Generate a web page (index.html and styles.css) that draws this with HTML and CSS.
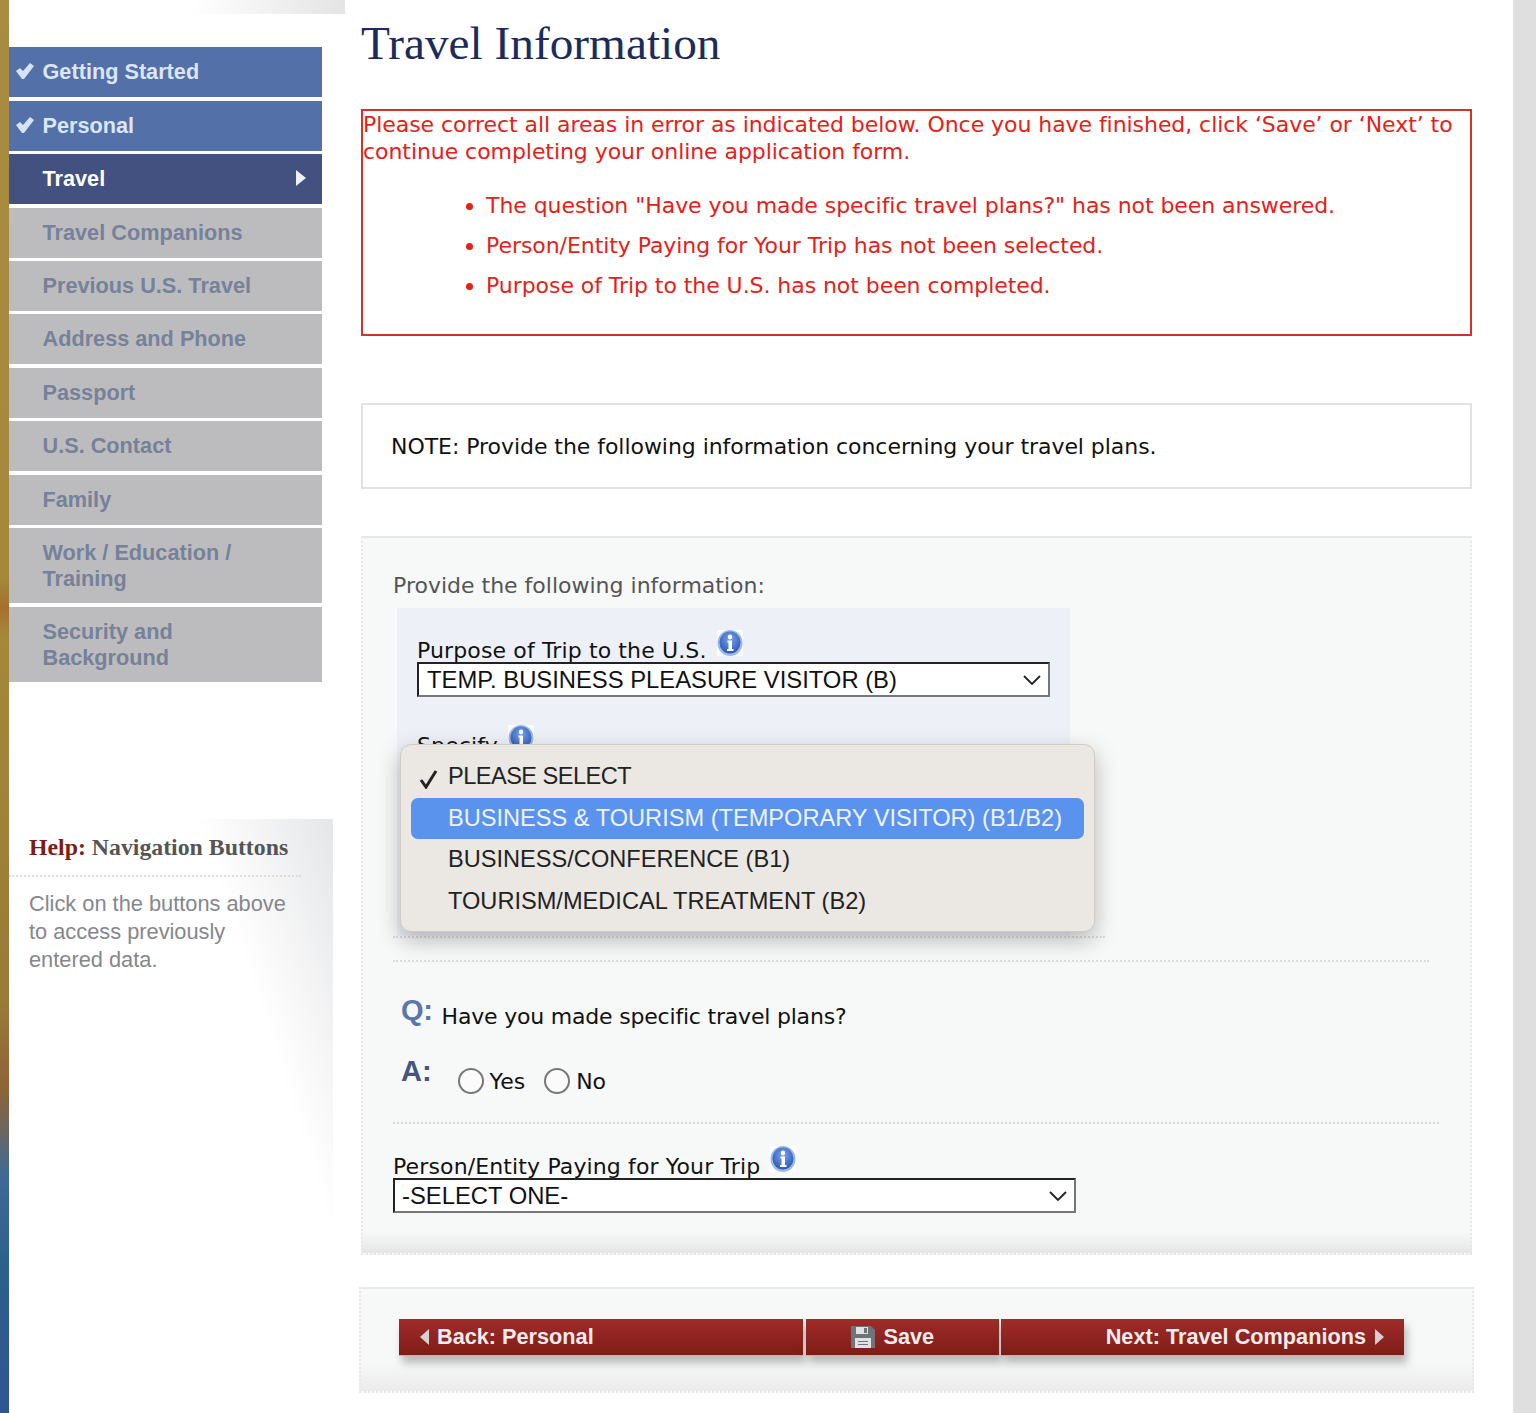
FILE: index.html
```html
<!DOCTYPE html>
<html lang="en">
<head>
<meta charset="utf-8">
<title>Travel Information</title>
<link rel="stylesheet" href="styles.css">
</head>
<body>
<div class="page">
  <div class="rail"></div>
  <aside class="side">
    <div class="side-top"></div>
    <nav class="nav">
      <a class="item done"><svg class="check" viewBox="0 0 18 16"><path d="M0 8l4-3 3 3 7-8 4 3-10 13H6z"/></svg>Getting Started</a>
      <a class="item done"><svg class="check" viewBox="0 0 18 16"><path d="M0 8l4-3 3 3 7-8 4 3-10 13H6z"/></svg>Personal</a>
      <a class="item current">Travel<svg class="arrow" viewBox="0 0 10 16"><path d="M0 0l10 8-10 8z"/></svg></a>
      <a class="item">Travel Companions</a>
      <a class="item">Previous U.S. Travel</a>
      <a class="item">Address and Phone</a>
      <a class="item">Passport</a>
      <a class="item">U.S. Contact</a>
      <a class="item">Family</a>
      <a class="item tall">Work / Education /<br>Training</a>
      <a class="item tall">Security and<br>Background</a>
    </nav>
    <section class="help">
      <h3 class="help-title"><span class="help-key">Help:</span> Navigation Buttons</h3>
      <p class="help-text">Click on the buttons above<br>to access previously<br>entered data.</p>
    </section>
  </aside>
  <main class="main">
    <h1 class="title">Travel Information</h1>
    <div class="errors">
      <p class="errors-intro">Please correct all areas in error as indicated below. Once you have finished, click ‘Save’ or ‘Next’ to continue completing your online application form.</p>
      <ul class="errors-list">
        <li>The question "Have you made specific travel plans?" has not been answered.</li>
        <li>Person/Entity Paying for Your Trip has not been selected.</li>
        <li>Purpose of Trip to the U.S. has not been completed.</li>
      </ul>
    </div>
    <div class="note">NOTE: Provide the following information concerning your travel plans.</div>
    <section class="panel">
      <p class="lead">Provide the following information:</p>
      <div class="group">
        <div class="label">Purpose of Trip to the U.S. <svg class="info" viewBox="0 0 26 26"><use href="#i"/></svg></div>
        <div class="select">TEMP. BUSINESS PLEASURE VISITOR (B)<svg class="chev" viewBox="0 0 18 10"><path d="M1 1l8 8 8-8"/></svg></div>
        <div class="label specify">Specify <svg class="info" viewBox="0 0 26 26"><use href="#i"/></svg></div>
      </div>
      <div class="rule rule-short"></div>
      <div class="rule rule-long"></div>
      <div class="qa">
        <div class="q"><span class="qa-key">Q:</span> Have you made specific travel plans?</div>
        <div class="a"><span class="qa-key">A:</span>
          <span class="radio"></span><span class="opt">Yes</span>
          <span class="radio"></span><span class="opt">No</span>
        </div>
      </div>
      <div class="rule rule-wide"></div>
      <div class="label payer">Person/Entity Paying for Your Trip <svg class="info" viewBox="0 0 26 26"><use href="#i"/></svg></div>
      <div class="select select-payer">-SELECT ONE-<svg class="chev" viewBox="0 0 18 10"><path d="M1 1l8 8 8-8"/></svg></div>

      <div class="menu">
        <div class="opt-row first"><svg class="tick" viewBox="0 0 20 20"><path d="M2 11l5 7L17 2"/></svg>PLEASE SELECT</div>
        <div class="opt-row active">BUSINESS &amp; TOURISM (TEMPORARY VISITOR) (B1/B2)</div>
        <div class="opt-row">BUSINESS/CONFERENCE (B1)</div>
        <div class="opt-row">TOURISM/MEDICAL TREATMENT (B2)</div>
      </div>
    </section>
    <section class="actions">
      <a class="btn back"><svg class="tri" viewBox="0 0 10 18"><path d="M10 0L0 9l10 9z"/></svg>Back: Personal</a>
      <a class="btn save"><svg class="disk" viewBox="0 0 26 24"><path class="disk-b" d="M1 1h20l4 4v18H1z"/><path class="disk-d" d="M6 2h12v7H6zM5 13h16v10H5z"/><path class="disk-b" d="M14 3h3v5h-3zM8 16h10v1H8zM8 19h10v1H8z"/></svg>Save</a>
      <a class="btn next">Next: Travel Companions<svg class="tri" viewBox="0 0 10 18"><path d="M0 0l10 9-10 9z"/></svg></a>
    </section>
  </main>
  <div class="scroll"></div>
</div>
<svg class="defs" width="0" height="0"><defs>
  <radialGradient id="g" cx="50%" cy="35%" r="65%"><stop offset="0" stop-color="#7ba4ea"/><stop offset="1" stop-color="#2a57b8"/></radialGradient>
  <g id="i"><rect width="26" height="26" fill="#fff" opacity=".8"/><ellipse cx="13" cy="13" rx="12.500" ry="13" fill="#9db9e4"/><ellipse cx="13" cy="12.500" rx="10.500" ry="11" fill="url(#g)"/><ellipse cx="13" cy="7" rx="2.200" ry="2.400" fill="#fff"/><path d="M10.500 10.500h4.500v8.500h1.500v2h-6.500v-2h1.500v-6.500h-1z" fill="#fff"/></g>
</defs></svg>
</body>
</html>
```
FILE: styles.css
```css
* { box-sizing: border-box; }
html, body { margin: 0; height: 1413px; overflow: hidden; background: #fff; }
body { font-family: "DejaVu Sans", Verdana, sans-serif; color: #111; }
.defs { position: absolute; }
.page { display: flex; height: 1413px; }

.rail { width: 9px; flex: none; background: linear-gradient(180deg, #a88c42 0, #a5883a 41%, #a56f30 43%, #a5883a 45%, #9a7a38 71%, #8e6338 77%, #6b6660 80%, #3f6a94 83%, #2d5f8c 90%, #2f5592 100%); }
.side { width: 336px; flex: none; font-family: "Liberation Sans", Arial, sans-serif; }
.side-top { height: 14px; background: linear-gradient(90deg, #fff 54%, #e4e4e4 100%); }
.nav { width: 313px; margin-top: 33.400px; display: flex; flex-direction: column; gap: 3.400px; }
.item { height: 50px; display: flex; align-items: center; position: relative; padding-left: 33.500px; font-size: 21.700px; font-weight: 700; line-height: 26px; background: #bcbcbe; color: #76819a; }
.tall { height: 75.500px; }
.done { background: #5370a9; color: #dbe6f6; }
.current { background: #42517f; color: #fff; }
.check { position: absolute; left: 7px; top: 16px; width: 18px; height: 16px; fill: #d5e3f7; }
.arrow { position: absolute; right: 16px; top: 16px; width: 10px; height: 16px; fill: #eef1f8; }
.help { width: 324px; height: 400px; margin-top: 137px; background: linear-gradient(72deg, #fff 70%, #e5e6e8 100%); }
.help-title { margin: 0; padding: 12px 0 12px 20px; height: 58px; width: 292px; border-bottom: 2px dotted #ddd; font: 700 23.800px/32px "Liberation Serif", serif; color: #555; }
.help-key { color: #7d1c14; }
.help-text { margin: 0; padding: 13px 0 0 20px; font-size: 21.800px; line-height: 28px; color: #85878b; }

.main { width: 1111px; margin-left: 16px; flex: none; position: relative; }
.title { margin: 0; padding-top: 15px; height: 109px; font: 400 47.300px/56px "Liberation Serif", serif; color: #1b2c5c; }
.errors { height: 227px; border: 2px solid #d3322c; padding: 0; color: #e32119; font-size: 22px; line-height: 27px; letter-spacing: -.06px; }
.errors-intro { margin: 0; }
.errors-list { margin: 27px 0 0; padding: 0 0 0 123px; }
.errors-list li { height: 40px; line-height: 27px; }
.note { margin-top: 67px; height: 86px; border: 2px solid #e2e2e2; padding-left: 28px; display: flex; align-items: center; font-size: 22px; letter-spacing: -.05px; }
.panel { position: relative; margin-top: 47px; height: 719px; padding: 34px 0 0 30px; background: linear-gradient(180deg, #f7f8f8 0, #f7f8f8 97%, #e6e6e6 100%); border: 2px dotted #e9e9e4; font-size: 22px; }
.lead { margin: 0; color: #555; line-height: 28px; }
.group { width: 673px; height: 328px; margin: 8px 0 0 4px; padding: 20px 20px 0; background: #edf1f7; }
.label { padding-top: 2px; line-height: 32px; height: 34px; white-space: nowrap; letter-spacing: .13px; }
.info { width: 26px; height: 26px; margin-left: 3px; vertical-align: 2px; }
.select { display: flex; align-items: center; justify-content: space-between; height: 35px; width: 633px; background: #fff; border: 2px solid #222; border-bottom-color: #777; border-right-color: #777; padding: 0 7px 0 8px; font-family: "Liberation Sans", Arial, sans-serif; font-size: 23.800px; }
.chev { width: 18px; height: 10px; fill: none; stroke: #222; stroke-width: 1.800; }
.specify { margin-top: 26px; }
.rule { border-top: 2px dotted #dcdcd6; }
.rule-short { width: 712px; }
.rule-long { width: 1036px; margin-top: 22px; }
.qa { height: 160px; padding: 35px 0 0 8px; }
.q { line-height: 34px; letter-spacing: -.2px; }
.qa-key { font: 700 29px/34px "Liberation Sans", Arial, sans-serif; color: #5a76ab; margin-right: 2px; position: relative; bottom: 4px; }
.a { display: flex; align-items: center; margin-top: 27px; height: 40px; }
.a .qa-key { color: #45557f; margin-right: 26px; bottom: 10px; }
.radio { width: 26px; height: 26px; border: 2px solid #777; border-radius: 50%; background: #fbfbfb; margin-right: 6px; }
.opt { margin-right: 19px; }
.rule-wide { width: 1046px; }
.payer { margin-top: 20px; }
.select-payer { width: 683px; padding-left: 7px; }
.menu { position: absolute; left: 37px; top: 206px; width: 695px; height: 188px; padding: 11px 10px; border-radius: 11px; border: 1px solid #cfccc6; background: #ebe8e3; box-shadow: 0 8px 22px rgba(60,60,60,.35); line-height: 41.500px; color: #222; }
.opt-row { position: relative; height: 41.500px; padding-left: 37px; border-radius: 7px; white-space: nowrap; font-family: "Liberation Sans", Arial, sans-serif; font-size: 23.600px; }
.first { letter-spacing: -.55px; }
.active { background: #5a93ee; color: #eef4ff; }
.tick { position: absolute; left: 8px; top: 13px; width: 20px; height: 20px; fill: none; stroke: #222; stroke-width: 3; }

.actions { margin-top: 32px; margin-left: -2px; width: 1115px; height: 106px; padding: 30px 0 0 38px; display: flex; gap: 2.500px; background: linear-gradient(180deg, #f7f8f8 70%, #ebebeb 100%); border: 2px dotted #e9e9e4; font-family: "Liberation Sans", Arial, sans-serif; }
.btn { height: 37px; display: flex; align-items: center; background: linear-gradient(180deg, #9f2c2a 0, #7f1c16 100%); box-shadow: 3px 7px 8px rgba(90,90,90,.4); border-bottom: 1px solid #d9a7a2; color: #f2ecec; font-size: 21.700px; font-weight: 700; }
.back { width: 404px; padding-left: 21px; }
.save { width: 193px; padding-left: 44px; }
.next { width: 403px; justify-content: flex-end; padding-right: 20px; }
.tri { width: 9px; height: 18px; fill: #d8cfcf; }
.back .tri { margin-right: 8px; }
.next .tri { margin-left: 9px; }
.disk { width: 26px; height: 24px; margin-right: 8px; }
.disk-b { fill: #6f7478; }
.disk-d { fill: #dfe3e5; }

.scroll { width: 23px; flex: none; margin-left: 41px; background: #dfdfdf; }
```
